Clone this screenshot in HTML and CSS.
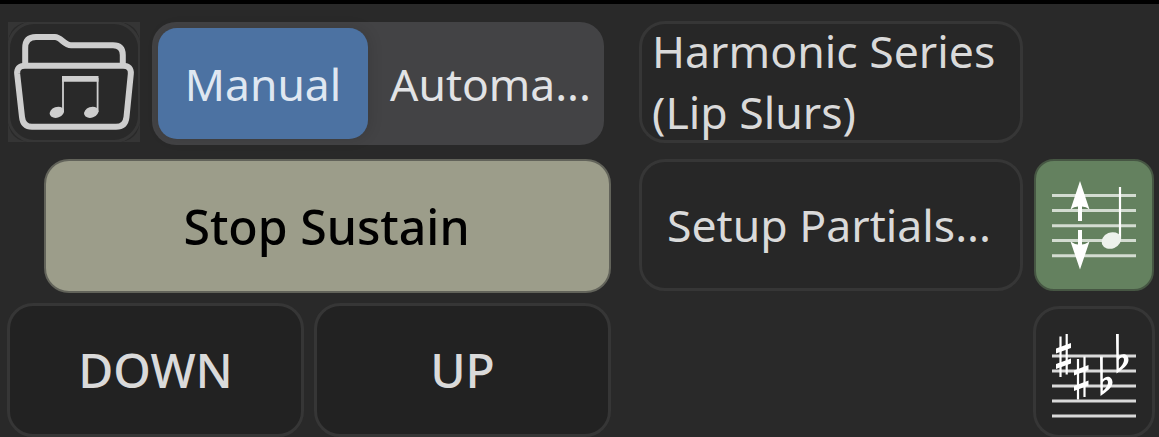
FILE: index.html
```
<!DOCTYPE html>
<html lang="en">
<head>
    <meta charset="UTF-8">
    <title>Harmonic Series</title>
    <link rel="stylesheet" href="styles.css">
</head>
<body>
    <div class="panel">
        <div class="left">
            <div class="row row-mode">
                <button class="folder-button" aria-label="Open">
                    <svg width="132" height="120" viewBox="8 22 132 120">
                        <path class="corner" fill-rule="evenodd" d="M8 22H140V142H8ZM32 22Q8 22 8 46V118Q8 142 32 142H116Q140 142 140 118V46Q140 22 116 22Z"/>
                        <rect class="frame" x="8.5" y="22.500" width="131" height="119" rx="26"/>
                        <g class="folder">
                            <path d="M25.200 64V48Q25.200 37 36 37H55C61 37 64 45.200 71 45.200H113Q122.800 45.200 122.800 55V64"/>
                            <path d="M25 65.800H123Q131.500 65.800 130.800 74L126.500 117Q125.500 126.800 116 126.800H32Q23 126.800 22 117L17.200 74Q16.500 65.800 25 65.800Z"/>
                        </g>
                        <path class="note-beam" d="M62 76H98.500V81.700H62Z"/>
                        <path class="note-stem" d="M63 78V112M97.600 78V112"/>
                        <ellipse class="note-head" cx="56.900" cy="112.300" rx="7.400" ry="5.300" transform="rotate(-20 56.900 112.300)"/>
                        <ellipse class="note-head" cx="91.300" cy="112.300" rx="7.400" ry="5.300" transform="rotate(-20 91.300 112.300)"/>
                    </svg>
                </button>
                <div class="segmented">
                    <button class="segment active">Manual</button>
                    <button class="segment">Automa...</button>
                </div>
            </div>
            <button class="btn stop">Stop Sustain</button>
            <div class="row row-steps">
                <button class="btn step">DOWN</button>
                <button class="btn step">UP</button>
            </div>
        </div>

        <div class="right">
            <button class="btn series"><span class="series-label">Harmonic Series<br>(Lip Slurs)</span></button>
            <button class="btn setup">Setup Partials...</button>
            <button class="btn icon-button transpose" aria-label="Transpose">
                <svg width="84" height="90" viewBox="1052 180 84 90">
                    <path class="staff green" d="M1052 195.500H1136M1052 210.500H1136M1052 225.700H1136M1052 240.500H1136M1052 255.700H1136"/>
                    <path class="solid" d="M1080 181L1089.500 209.500Q1086 206.500 1082 206.500V221H1078V206.500Q1074 206.500 1070.500 209.500Z"/>
                    <path class="solid" d="M1080 269.500L1089.500 241.500Q1086 244 1082 244.500V230H1078V244.500Q1074 244 1070.500 241.500Z"/>
                    <path class="stem" d="M1120 187V239"/>
                    <ellipse class="head" cx="1111.300" cy="240.500" rx="10" ry="8" transform="rotate(-22 1111.300 240.500)"/>
                </svg>
            </button>
            <button class="btn icon-button key" aria-label="Key signature">
                <svg width="84" height="90" viewBox="1052 330 84 90">
                    <path class="staff" d="M1052 356H1136M1052 371H1136M1052 386H1136M1052 401H1136M1052 416H1136"/>
                    <path class="sharp-stem" d="M1060.500 336.500V377M1066.700 334V374.500M1078 359V399.500M1084.500 356.500V397"/>
                    <path class="solid" d="M1056 348.500L1071 343V348L1056 353.500ZM1056 364L1071 358.500V363.500L1056 369ZM1074 370.500L1088.500 365V370L1074 375.500ZM1074 386L1088.500 380.500V385.500L1074 391Z"/>
                    <path class="solid" fill-rule="evenodd" d="M1116 334H1118.800V356.500C1122 352.500 1128.500 353.500 1128.500 360C1128.500 365 1122 369.500 1116.500 373.500ZM1118.800 360V368.500C1122 366 1124 362.500 1124 360C1124 356 1120.500 356.500 1118.800 360Z"/>
                    <path class="solid" fill-rule="evenodd" d="M1100 356.500H1102.800V379.300C1106 375 1112.500 376 1112.500 382.500C1112.500 387.500 1106 392 1100.500 396ZM1102.800 382.500V391C1106 388.500 1108 385 1108 382.500C1108 378.500 1104.500 379 1102.800 382.500Z"/>
                </svg>
            </button>
        </div>
    </div>
</body>
</html>
```

FILE: styles.css
```
* {
    box-sizing: border-box;
}
body {
    margin: 0;
    height: 437px;
    overflow: hidden;
    background: #292929;
    border-top: 4px solid #000;
    font-family: "Noto Sans", sans-serif;
}
button {
    margin: 0;
    padding: 0;
    border: none;
    background: none;
    color: #dadada;
    font-family: inherit;
    font-size: 44.6px;
    line-height: 61px;
    white-space: nowrap;
}
svg {
    display: block;
}
.panel {
    display: flex;
    gap: 28px;
    padding: 17px 4px 0 7px;
}
.left {
    width: 604px;
}
.row {
    display: flex;
}
.row-mode {
    padding: 1px 7px 0 1px;
    gap: 12px;
    height: 138px;
    align-items: flex-start;
}
.segmented {
    display: flex;
    flex: 1;
    height: 123px;
    padding: 6px;
    border-radius: 24px;
    background: #434345;
}
.segment {
    flex: 1;
    height: 111px;
    padding: 2px 0 0 15px;
    border-radius: 19px;
    color: #e2e3e5;
    font-size: 44.4px;
}
.segment.active {
    flex: 0 0 210px;
    padding-left: 0;
    background: #4c72a2;
    color: #dfe7f1;
    box-shadow: 2px 0 14px rgba(0, 0, 0, 0.12);
}

/* Buttons */
.btn {
    border: 3px solid #363636;
    border-radius: 26px;
    background: #272727;
}
.stop {
    display: block;
    width: 567px;
    height: 134px;
    margin-left: 37px;
    padding-right: 2px;
    border: 2px solid #62635a;
    border-radius: 25px;
    background: #9c9d8a;
    color: #000;
    font-size: 48.2px;
    font-weight: 500;
}
.row-steps {
    gap: 10px;
    margin-top: 10px;
}
.step {
    width: 297px;
    height: 134px;
    padding-bottom: 2px;
    background: #222;
    font-size: 48px;
    font-weight: 500;
}
.right {
    display: grid;
    grid-template-columns: 384px 122px;
    grid-template-rows: 122px 132px 131px;
    column-gap: 10px;
    row-gap: 16px;
    width: 516px;
}
.series {
    grid-column: 1;
    padding-left: 10px;
    text-align: left;
}
.series-label {
    display: block;
    margin-top: -4px;
}
.setup {
    grid-column: 1;
    padding: 0 4px 2px 0;
}
.icon-button {
    grid-column: 2;
    display: flex;
    align-items: center;
    justify-content: center;
    border-radius: 26px;
}
.transpose {
    margin: 0 1px;
    border: 2px solid #465643;
    border-radius: 20px;
    background: #64815f;
}
.key {
    margin-top: -1px;
    padding-top: 6px;
}

/* Icons */
.corner {
    fill: #353535;
}
.frame {
    fill: none;
    stroke: #363636;
    stroke-width: 3;
}
.folder {
    fill: none;
    stroke: #cecece;
    stroke-width: 6;
    stroke-linejoin: round;
}
.note-beam,
.note-head {
    fill: #cecece;
}
.note-stem {
    stroke: #cecece;
    stroke-width: 1.8;
}
.staff {
    stroke: #d9d9d9;
    stroke-width: 3;
}
.staff.green {
    stroke: #d3dcd1;
}
.solid {
    fill: #fff;
}
.stem,
.sharp-stem {
    stroke: #fff;
    stroke-width: 2.2;
}
.head {
    fill: #edf1ec;
}
```
